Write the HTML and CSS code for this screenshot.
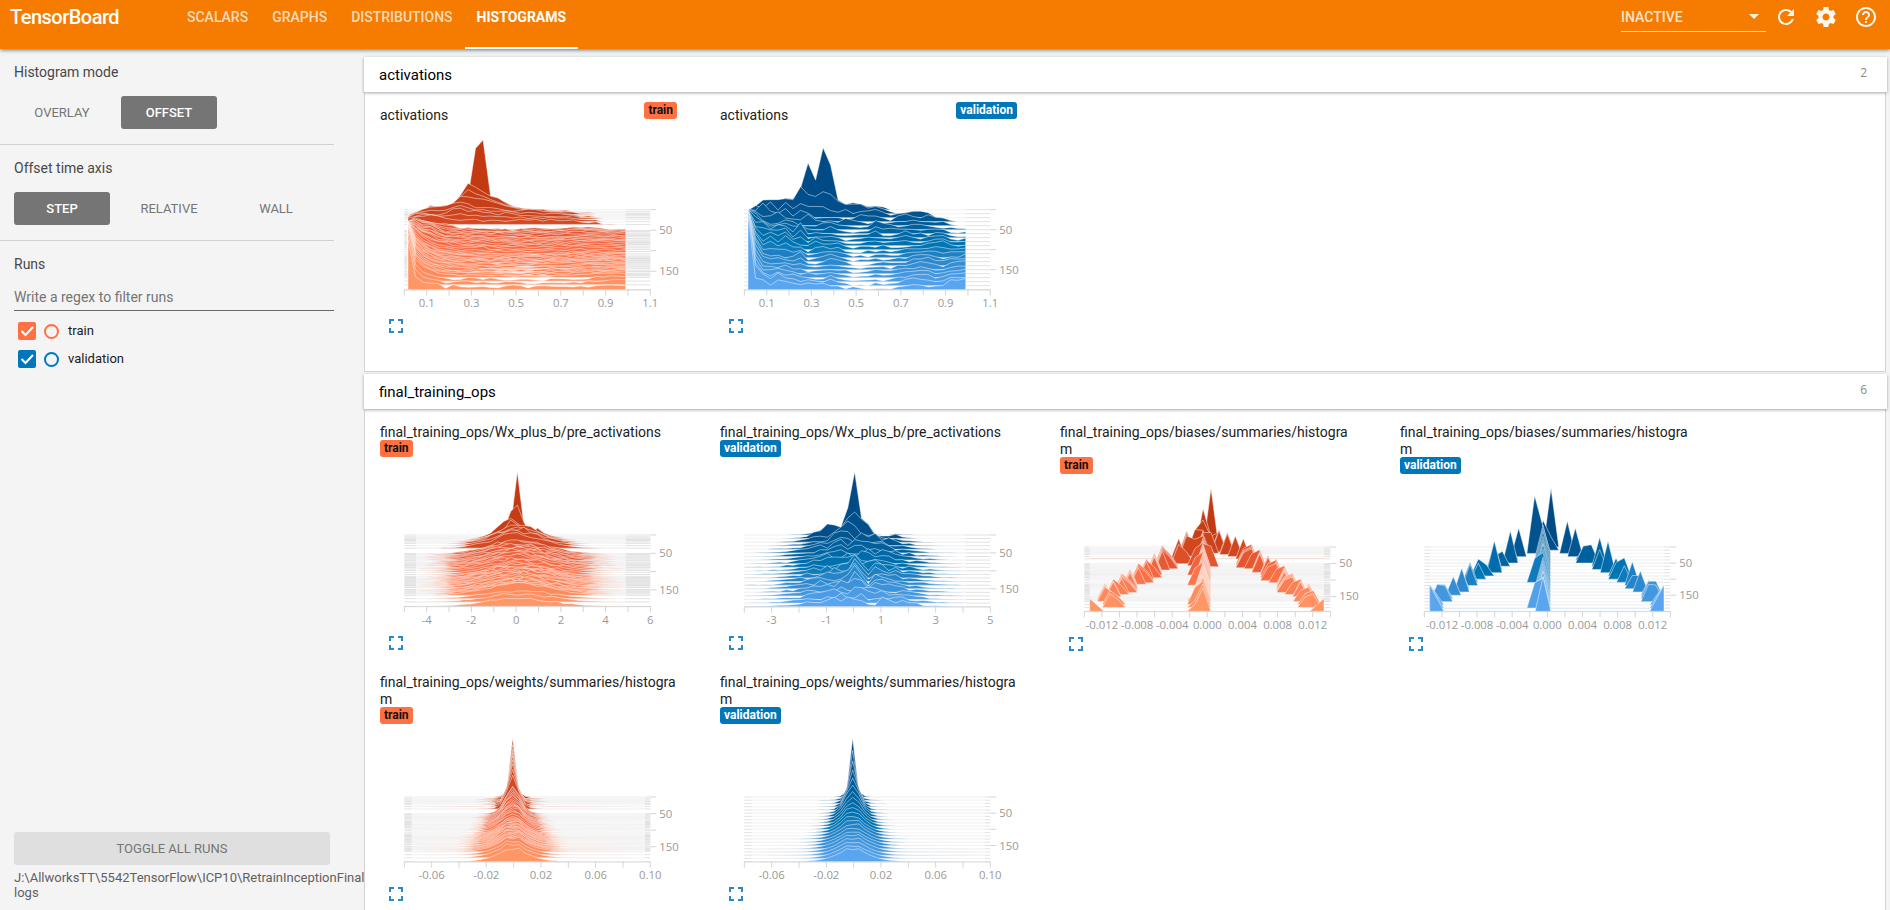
FILE: index.html
```html
<!DOCTYPE html>
<html lang="en">
<head>
<meta charset="utf-8">
<title>TensorBoard</title>
<link rel="stylesheet" href="styles.css">
</head>
<body>
<header class="toolbar">
  <div class="brand">TensorBoard</div>
  <nav class="tabs">
    <a class="tab">SCALARS</a>
    <a class="tab">GRAPHS</a>
    <a class="tab">DISTRIBUTIONS</a>
    <a class="tab tab-active">HISTOGRAMS</a>
  </nav>
  <div class="tools">
    <div class="inactive"><span>INACTIVE</span><i class="caret"></i></div>
    <svg class="tool-icon" viewBox="0 0 24 24"><path d="M17.65 6.35C16.2 4.9 14.21 4 12 4c-4.42 0-7.99 3.58-7.99 8s3.57 8 7.99 8c3.73 0 6.84-2.55 7.73-6h-2.08c-.82 2.33-3.04 4-5.65 4-3.31 0-6-2.69-6-6s2.69-6 6-6c1.66 0 3.14.69 4.22 1.78L13 11h7V4l-2.35 2.35z"/></svg>
    <svg class="tool-icon" viewBox="0 0 24 24"><path d="M19.43 12.98c.04-.32.07-.64.07-.98s-.03-.66-.07-.98l2.11-1.65c.19-.15.24-.42.12-.64l-2-3.46c-.12-.22-.39-.3-.61-.22l-2.49 1c-.52-.4-1.08-.73-1.69-.98l-.38-2.65C14.46 2.18 14.25 2 14 2h-4c-.25 0-.46.18-.49.42l-.38 2.65c-.61.25-1.17.59-1.69.98l-2.49-1c-.23-.09-.49 0-.61.22l-2 3.46c-.13.22-.07.49.12.64l2.11 1.65c-.04.32-.07.65-.07.98s.03.66.07.98l-2.11 1.65c-.19.15-.24.42-.12.64l2 3.46c.12.22.39.3.61.22l2.49-1c.52.4 1.08.73 1.69.98l.38 2.65c.03.24.24.42.49.42h4c.25 0 .46-.18.49-.42l.38-2.65c.61-.25 1.17-.59 1.69-.98l2.49 1c.23.09.49 0 .61-.22l2-3.46c.12-.22.07-.49-.12-.64l-2.11-1.65zM12 15.5c-1.93 0-3.5-1.57-3.5-3.5s1.57-3.5 3.5-3.5 3.500 1.57 3.500 3.500-1.570 3.500-3.500 3.500z"/></svg>
    <svg class="tool-icon" viewBox="0 0 24 24"><path d="M11 18h2v-2h-2v2zm1-16C6.480 2 2 6.480 2 12s4.480 10 10 10 10-4.480 10-10S17.520 2 12 2zm0 18c-4.410 0-8-3.590-8-8s3.590-8 8-8 8 3.590 8 8-3.590 8-8 8zm0-14c-2.210 0-4 1.790-4 4h2c0-1.100.9-2 2-2s2 .9 2 2c0 2-3 1.750-3 5h2c0-2.250 3-2.500 3-5 0-2.210-1.790-4-4-4z"/></svg>
  </div>
</header>
<div class="page">
  <aside class="sidebar">
    <section class="group">
      <h3>Histogram mode</h3>
      <div class="choices"><button class="choice">OVERLAY</button><button class="choice chosen">OFFSET</button></div>
    </section>
    <section class="group">
      <h3>Offset time axis</h3>
      <div class="choices"><button class="choice chosen">STEP</button><button class="choice">RELATIVE</button><button class="choice">WALL</button></div>
    </section>
    <section class="group runs">
      <h3>Runs</h3>
      <div class="regex">Write a regex to filter runs</div>
      <div class="run run-train"><svg class="check" viewBox="0 0 18 18"><rect width="18" height="18" rx="2"/><path d="M3.500 9l4 4 7.500-8"/></svg><i class="ring"></i><span>train</span></div>
      <div class="run run-validation"><svg class="check" viewBox="0 0 18 18"><rect width="18" height="18" rx="2"/><path d="M3.500 9l4 4 7.500-8"/></svg><i class="ring"></i><span>validation</span></div>
    </section>
    <footer class="side-foot">
      <button class="toggle">TOGGLE ALL RUNS</button>
      <div class="logdir">J:\AllworksTT\5542TensorFlow\ICP10\RetrainInceptionFinal<br>logs</div>
    </footer>
  </aside>
  <main class="main">
    <section class="pane">
      <div class="pane-head"><span>activations</span><em>2</em></div>
      <div class="pane-body pane-one" id="pane-activations"></div>
    </section>
    <section class="pane">
      <div class="pane-head"><span>final_training_ops</span><em>6</em></div>
      <div class="pane-body pane-two" id="pane-final"></div>
    </section>
  </main>
</div>
<script src="charts.js"></script>
</body>
</html>
```
FILE: styles.css
```css
* { box-sizing: border-box; }
body { margin: 0; height: 910px; overflow: hidden; background: #f4f4f4; color: #212121; font-family: Roboto, "Open Sans", sans-serif; font-size: 14px; display: flex; flex-direction: column; }
button { font: inherit; border: 0; padding: 0; }
.toolbar { height: 49px; flex: none; background: #f57c00; color: #fff; display: flex; position: relative; z-index: 2; box-shadow: 0 1px 4px rgba(0,30,50,.6); }
.brand { width: 175px; padding-left: 10px; line-height: 35px; font-size: 20px; font-weight: 500; letter-spacing: -.52px; }
.tabs { display: flex; }
.tab { padding: 0 12px; line-height: 34px; font-weight: 500; color: rgba(255,255,255,.72); }
.tab-active { color: #fff; border-bottom: 2px solid #fff; font-weight: 700; }
.tools { margin-left: auto; height: 34px; display: flex; align-items: center; padding-right: 12px; gap: 16px; }
.inactive { width: 145px; height: 25px; margin-top: 5px; margin-right: -8px; border-bottom: 1px solid #fde3c4; display: flex; justify-content: space-between; align-items: center; padding: 0 7px 5px 0; font-weight: 500; color: rgba(255,255,255,.8); }
.caret { border: 5px solid transparent; border-top-color: #fff3e0; border-bottom: 0; }
.tool-icon { width: 24px; height: 24px; fill: #fff8ee; }
.page { flex: 1; display: flex; min-height: 0; }
.sidebar { width: 364px; flex: none; display: flex; flex-direction: column; overflow: hidden; }
.group { width: 334px; height: 96px; padding: 15px 0 0 14px; border-bottom: 1px solid #d0d0d0; }
.group h3 { margin: 0 0 15px; font-size: 14px; line-height: 17px; font-weight: 400; color: #484848; }
.choices { display: flex; gap: 11px; }
.choice { width: 96px; height: 33px; border-radius: 3px; background: none; color: #757575; font-size: 13px; padding: 0 0 1px; }
.chosen { background: #757575; color: #fff; font-weight: 500; }
.runs { height: auto; border: 0; }
.group.runs h3 { margin-bottom: 7px; }
.regex { height: 31px; line-height: 34px; border-bottom: 1px solid #686868; color: #757575; margin-bottom: 6px; }
.run { height: 28px; display: flex; align-items: center; padding-left: 4px; }
.check { width: 18px; height: 18px; fill: currentColor; }
.check path { fill: none; stroke: #fff; stroke-width: 2; }
.ring { width: 15px; height: 15px; border: 2px solid currentColor; border-radius: 50%; margin: 0 9px 0 8px; }
.run span { color: #212121; font-size: 13px; padding-bottom: 1px; }
.run-train { color: #ff7043; }
.run-validation { color: #0077bb; }
.side-foot { margin-top: auto; padding: 0 0 10px 14px; }
.toggle { width: 316px; height: 33px; display: block; border-radius: 3px; background: #dfdfdf; color: #757575; margin-bottom: 5px; font-size: 13px; }
.logdir { white-space: nowrap; line-height: 15px; color: #616161; font-size: 13px; }
.main { flex: 1; padding: 8px 3px 0 0; min-width: 0; }
.pane-head { height: 35px; display: flex; justify-content: space-between; padding: 0 20px 0 15px; line-height: 37px; background: #fff; color: #000; font-size: 15px; position: relative; box-shadow: 0 1px 3px rgba(0,0,0,.36); }
.pane-head em { font: 12px/31px "Open Sans", sans-serif; color: #8a8a8a; }
.pane-body { margin: 0 1px 0 0; background: #fff; border: 1px solid #d4d4d4; border-top: 0; display: grid; grid-template-columns: repeat(4, 340px); grid-auto-rows: 250px; padding-left: 15px; align-content: start; }
.pane-one { height: 280px; margin-bottom: 2px; padding-top: 10px; }
.pane-two { height: 540px; padding-top: 14px; }
.card-title { width: 299px; line-height: 17px; word-break: break-all; padding-top: 1px; margin-bottom: -1px; }
.tag { display: table; height: 17px; line-height: 16px; padding: 0 4px; border-radius: 3px; font-size: 12px; font-weight: 700; }
.tag-train { background: #ff7043; color: #111; }
.tag-validation { background: #0077b8; color: #fff; }
.inline-head { display: flex; justify-content: space-between; width: 297px; height: 22px; }
.inline-head .card-title { width: auto; padding-top: 5px; }
.plot { display: block; width: 300px; overflow: visible; }
.plot text { font-family: "Open Sans", sans-serif; font-size: 34px; fill: #999; }
.expand { display: block; width: 14px; height: 14px; margin: 1px 0 0 9px; fill: none; stroke: #2b88c9; stroke-width: 2; }
```
FILE: charts.js
```js
// Offset-mode histograms. Plot coordinates use three units per CSS pixel.
const RAMP = {
  train: [[0, [194, 58, 18]], [0.25, [220, 78, 40]], [0.55, [252, 112, 72]], [1, [255, 150, 102]]],
  validation: [[0, [0, 74, 134]], [0.5, [0, 117, 180]], [0.6, [30, 128, 195]], [1, [90, 165, 240]]]
};
const TRAIN_STEPS = [0, 5, 9, 12, 15, 19, 23, 29, 36, 51, 53, 57, 60, 63, 66, 70, 74, 77, 80, 83, 85, 89, 93, 97, 102, 108, 113, 116, 119, 121, 124, 127, 129, 132, 135, 138, 142, 144, 149, 151, 155, 158, 161, 165, 174, 183, 195];
const VAL_STEPS = Array.from({ length: 21 }, (_, k) => k * 10);

function rng(seed) {
  return () => {
    seed = (seed * 1664525 + 1013904223) >>> 0;
    return seed / 4294967296;
  };
}
function lerpKeys(keys, t) {
  if (t <= keys[0][0]) return keys[0][1].slice();
  for (let i = 1; i < keys.length; i++) {
    if (t <= keys[i][0]) {
      const [a, va] = keys[i - 1], [b, vb] = keys[i], f = (t - a) / (b - a);
      return va.map((v, j) => v + ((vb[j] || 0) - v) * f);
    }
  }
  return keys[keys.length - 1][1].slice();
}
function tone(run, t) {
  return `rgb(${lerpKeys(RAMP[run], t).map(Math.round).join(',')})`;
}
const pad = (a, n = 30) => a.concat(Array(n - a.length).fill(0));

const actTrain = [
  [0, pad([0, 0, 0, 3, 6, 8, 10, 14, 40, 184, 209, 41, 33, 22, 10, 5, 3, 2, 1])],
  [5, pad([0, 0, 6, 16, 14, 17, 24, 48, 86, 76, 62, 44, 38, 26, 14, 9, 7, 6, 5, 4, 3, 2, 1])],
  [12, pad([0, 5, 15, 22, 21, 26, 32, 55, 55, 50, 44, 40, 34, 28, 22, 18, 16, 15, 13, 11, 9, 7, 5, 3, 2])],
  [15, pad([0, 10, 18, 26, 28, 28, 35, 42, 34, 26, 26, 22, 20, 18, 16, 18, 18, 17, 15, 12, 10, 7, 4, 2, 1])],
  [23, pad([3, 14, 20, 15, 10, 16, 28, 30, 26, 24, 22, 16, 14, 18, 14, 10, 10, 10, 10, 10, 10, 9, 9, 7, 5, 3])],
  [36, pad([12, 22, 24, 28, 24, 18, 16, 14, 12, 14, 12, 14, 12, 12, 12, 13, 13, 13, 13, 13, 13, 12, 11, 9, 7, 5, 3, 1])],
  [51, [28, 36, 30, 26, 20, 18, 16, 9, 7, 6, 6, 5, 5, 4, 4, 5, 5, 6, 6, 7, 7, 8, 9, 9, 9, 8, 5, 4, 3, 3]],
  [63, [42, 48, 36, 38, 22, 12, 17, 14, 12, 10, 9, 8, 10, 9, 8, 8, 9, 9, 10, 11, 13, 13, 14, 14, 14, 14, 13, 12, 11, 10]],
  [102, [90, 62, 44, 32, 22, 20, 14, 12, 11, 12, 14, 8, 8, 8, 9, 10, 9, 8, 8, 11, 12, 13, 14, 14, 13, 13, 13, 13, 12, 11]],
  [150, [145, 62, 38, 27, 18, 15, 12, 10, 10, 7, 6, 6, 5, 5, 5, 4, 5, 5, 5, 8, 8, 7, 10, 13, 12, 12, 12, 13, 13, 14]],
  [174, [165, 52, 28, 18, 11, 7, 6, 7, 8, 8, 7, 7, 5, 5, 4, 4, 4, 3, 3, 5, 6, 6, 7, 8, 9, 11, 11, 13, 14, 14]],
  [195, [150, 36, 24, 20, 19, 7, 16, 11, 9, 8, 7, 7, 7, 11, 12, 9, 7, 8, 9, 8, 7, 7, 8, 8, 9, 10, 11, 12, 14, 15]]
];
const actVal = [
  [0, pad([0, 3, 26, 22, 28, 34, 32, 64, 140, 89, 186, 134, 29, 16, 21, 16, 9, 11, 8])],
  [10, pad([5, 26, 37, 46, 43, 46, 44, 78, 61, 55, 63, 55, 38, 28, 32, 27, 20, 22, 18, 5, 0])],
  [20, pad([20, 35, 30, 44, 26, 48, 28, 42, 32, 32, 32, 22, 20, 22, 12, 15, 22, 24, 20, 4, 10, 18, 18, 17, 15, 4])],
  [30, pad([35, 37, 52, 30, 22, 36, 18, 34, 28, 12, 15, 12, 10, 8, 6, 18, 20, 14, 12, 6, 15, 20, 18, 14, 18, 13, 11, 5])],
  [40, pad([48, 46, 30, 26, 38, 24, 18, 20, 34, 20, 12, 18, 14, 24, 15, 10, 6, 14, 12, 7, 10, 12, 15, 13, 14, 12, 10, 4])],
  [50, [62, 52, 26, 20, 16, 32, 28, 8, 9, 13, 20, 22, 11, 14, 8, 10, 8, 25, 22, 16, 9, 15, 18, 12, 10, 9, 5, 4, 4, 4]],
  [70, [85, 45, 46, 28, 42, 38, 14, 42, 14, 12, 10, 16, 8, 6, 7, 10, 14, 18, 10, 9, 13, 18, 12, 13, 9, 15, 16, 10, 5, 5]],
  [100, [120, 52, 24, 43, 24, 40, 22, 17, 11, 26, 20, 14, 22, 9, 3, 8, 11, 7, 13, 8, 10, 11, 8, 10, 18, 24, 24, 16, 13, 14]],
  [130, [155, 67, 25, 15, 23, 14, 19, 26, 7, 9, 16, 24, 19, 9, 1, 3, 3, 9, 8, 6, 9, 12, 19, 23, 24, 14, 12, 18, 15, 21]],
  [160, [190, 56, 25, 21, 17, 23, 13, 14, 9, 8, 10, 12, 14, 11, 3, 6, 6, 13, 8, 8, 10, 13, 18, 22, 18, 12, 12, 19, 25, 26]],
  [190, [230, 58, 32, 22, 38, 20, 24, 12, 18, 11, 12, 18, 12, 5, 2, 4, 2, 6, 5, 8, 10, 18, 21, 19, 18, 12, 12, 25, 25, 24]],
  [200, [220, 37, 31, 17, 28, 26, 17, 15, 18, 14, 18, 12, 11, 2, 5, 4, 3, 3, 5, 4, 7, 11, 14, 14, 12, 12, 12, 27, 31, 30]]
];
function fromKeys(keys, noise, x0, gap, seed) {
  const r = rng(seed);
  return s => lerpKeys(keys, s).map((h, i) => {
    const wobble = s && h > 1 ? (r() - 0.5) * noise : 0;
    return [x0 + i * gap, Math.max(0, h + wobble)];
  });
}
// Bell profile whose amplitude and spread depend on the step.
function bell(center, gap, half, amp, left, right, noise, seed, heads) {
  const r = rng(seed);
  return s => {
    const out = [], A = amp(s);
    for (let j = -half; j <= half; j++) {
      const w = j < 0 ? left(s) : right(s), q = Math.abs(j * gap) / w;
      let h = A * Math.exp(-q * q / 2);
      if (s) h *= 1 + (r() - 0.5) * noise;
      if (heads[s] && heads[s][j] !== undefined) h = heads[s][j];
      out.push([center + j * gap, h < 0.4 ? 0 : h]);
    }
    return out;
  };
}
// Separate spikes rising from a flat line: [x, height] pairs, at the outer edges they are half spikes.
const BIN = 24.4, EDGE = 43;
function spikes(list, x0 = 119, x1 = 822) {
  const map = new Map([[x0, 0], [x1, 0]]);
  list.forEach(([x, h]) => map.set(x, Math.max(h, map.get(x) || 0)));
  const xs = [...map.keys()].sort((a, b) => a - b), out = [];
  xs.forEach((x, i) => {
    const h = map.get(x), prev = xs[i - 1], next = xs[i + 1];
    const reach = x === x0 || x === x1 ? EDGE : BIN - 1;
    if (h && prev !== undefined && x - prev > BIN + 4) out.push([x - reach, 0]);
    out.push([x, h]);
    if (h && next !== undefined && next - x > BIN + 4) out.push([x + reach, 0]);
  });
  return out;
}
const BIAS_R = [[0, 483], [9, 507], [14, 507], [19, 532], [23, 532], [29, 556], [36, 580], [51, 605], [60, 605], [66, 629], [74, 629], [80, 654], [89, 678], [97, 678], [108, 703], [119, 703], [127, 727], [142, 751], [155, 776], [170, 790], [195, 822]];
const BIAS_L = [[0, 483], [5, 459], [12, 435], [15, 410], [23, 410], [36, 386], [53, 337], [63, 337], [74, 313], [80, 313], [89, 289], [102, 265], [116, 240], [129, 215], [144, 190], [155, 165], [174, 180], [195, 119]];
const at = (table, s) => { let v = table[0][1]; for (const [k, x] of table) if (s >= k) v = x; return v; };
function biasTrain(s) {
  if (s === 0) return spikes([[483, 176]]);
  if (s === 5) return spikes([[459, 120], [483, 35]]);
  if (s === 9) return spikes([[435, 60], [459, 90], [483, 40], [507, 55]]);
  const h = 66 - s * 0.14, list = [[459, s < 40 ? 62 : 70]];
  if ([29, 57, 85, 116, 174].includes(s)) list.push([435, 52]);
  if ([19, 60].includes(s)) list.push([483, 62]);
  if (s > 160) list.push([435, 22]);
  list.push([at(BIAS_L, s), h], [at(BIAS_R, s), h]);
  if (s > 36 && s < 190 && s % 3 === 0) list.push([at(BIAS_R, s) - 24, h * 0.8], [at(BIAS_L, s) + 24, h * 0.6]);
  return spikes(list);
}
const VAL_BIAS = [
  [[483, 176]], [[459, 90], [483, 40]], [[434, 173], [459, 80], [532, 97]], [[386, 86], [459, 95], [556, 86]],
  [[361, 60], [459, 95], [580, 38], [604, 36]], [[361, 97], [459, 95], [580, 51], [604, 55]], [[337, 45], [313, 30], [459, 90], [629, 87]],
  [[313, 80], [459, 90], [629, 60]], [[313, 96], [459, 90], [654, 95]], [[265, 51], [289, 34], [459, 95], [678, 54]],
  [[265, 48], [459, 90], [678, 50], [703, 64]], [[240, 60], [434, 72], [459, 90], [703, 50]], [[240, 64], [459, 85], [727, 72]],
  [[215, 52], [459, 85], [727, 40], [751, 40]], [[215, 72], [459, 85], [751, 64]], [[190, 56], [459, 85], [776, 46]],
  [[142, 42], [165, 42], [459, 85], [776, 52], [798, 52]], [[142, 52], [165, 48], [459, 90], [776, 52], [798, 50]],
  [[119, 62], [459, 85], [822, 60]], [[119, 70], [434, 76], [459, 90], [822, 68]], [[119, 80], [459, 104], [822, 79]]
];
const preTrain = bell(472, 20, 15, s => s < 12 ? 70 : s > 165 ? 24 : 34 + 20 * Math.exp(-s / 30),
  s => 24 + 72 * (1 - Math.exp(-s / 26)), s => 28 + 76 * (1 - Math.exp(-s / 30)), 0.38, 11,
  { 0: { '-1': 26, 0: 190, 1: 27, 2: 3, '-2': 12 }, 5: { '-2': 22, '-1': 76, 0: 95, 1: 43, 2: 8 }, 9: { '-1': 60, 0: 46, 1: 26, 2: 9 }, 12: { '-1': 58, 0: 44, 1: 30 } });
const preVal = bell(464, 20.5, 16, s => s < 20 ? 60 : 26 + 16 * Math.exp(-s / 50),
  s => 60 + 58 * (1 - Math.exp(-s / 45)), s => 52 + 72 * (1 - Math.exp(-s / 50)), 0.9, 29,
  { 0: { '-3': 15, '-2': 25, '-1': 82, 0: 190, 1: 50, 2: 32, 3: 2, 4: 0, 5: 0 }, 10: { '-2': 34, '-1': 62, 0: 80, 1: 58, 2: 42, 3: 9, 4: 8, 5: 8 }, 20: { '-1': 63, 0: 50, 1: 24 },
    70: { 1: 18 }, 90: { 0: 38, 1: 20 }, 110: { 0: 60, 1: 34, 2: 12 }, 120: { 0: 58, 1: 34, 2: 10 }, 130: { 0: 56, 1: 30, 2: 8 }, 140: { 0: 60, 1: 32, 2: 5 }, 150: { 0: 52, 1: 30, 2: 8 }, 160: { 0: 42, 2: 12 }, 190: { 2: 9 }, 200: { 0: 22, 1: 18, 2: 7, 3: 5 } });
// Sharp centred peak that settles into a low, wide mound.
function weights(noise, seed) {
  const r = rng(seed);
  return s => {
    const A = 34 + 142 * Math.exp(-s / 48), w = Math.min(46, 6.5 + 0.25 * s), out = [];
    for (let j = -9; j <= 9; j++) {
      const x = Math.abs(j * 18.5), core = s < 12 ? [A, 16, 3][Math.abs(j)] || 0 : A * Math.exp(-Math.pow(x / w, 1.5) / 1.7);
      const tail = s ? 14 * Math.exp(-x / 26) * (1 + (r() - .5) * noise) : 0;
      const h = core + (j ? tail : 0);
      out.push([458 + j * 18.5, h < 0.35 ? 0 : h]);
    }
    return out;
  };
}

const FINAL = 'final_training_ops/';
const CARDS = [
  { pane: 'pane-activations', title: 'activations', run: 'train', inline: true, view: [60, 102, 582], y: [359, 599], ext: [144, 797], f: fromKeys(actTrain, 6, 144, 22.52, 7), ticks: 11, labels: ['0.1', '0.3', '0.5', '0.7', '0.9', '1.1'] },
  { pane: 'pane-activations', title: 'activations', run: 'validation', inline: true, view: [60, 102, 582], y: [359, 599], ext: [144, 797], f: fromKeys(actVal, 8, 144, 22.52, 9), ticks: 11, labels: ['0.1', '0.3', '0.5', '0.7', '0.9', '1.1'] },
  { pane: 'pane-final', title: FINAL + 'Wx_plus_b/pre_activations', run: 'train', view: [60, 171, 534], y: [405, 619], ext: [168, 797], f: preTrain, ticks: 11, labels: ['-4', '-2', '0', '2', '4', '6'] },
  { pane: 'pane-final', title: FINAL + 'Wx_plus_b/pre_activations', run: 'validation', view: [60, 171, 534], y: [405, 620], ext: [150, 797], f: preVal, ticks: 9, labels: ['-3', '-1', '1', '3', '5'] },
  { pane: 'pane-final', title: FINAL + 'biases/summaries/histogram', run: 'train', view: [30, 222, 486], y: [441, 634], ext: [119, 822], f: biasTrain, ticks: 14, labels: ['-0.012', '-0.008', '-0.004', '0.000', '0.004', '0.008', '0.012'] },
  { pane: 'pane-final', title: FINAL + 'biases/summaries/histogram', run: 'validation', view: [30, 222, 486], y: [441, 634], ext: [119, 822], f: s => spikes(VAL_BIAS[s / 10]), ticks: 14, labels: ['-0.012', '-0.008', '-0.004', '0.000', '0.004', '0.008', '0.012'] },
  { pane: 'pane-final', title: FINAL + 'weights/summaries/histogram', run: 'train', view: [60, 192, 486], y: [411, 605], ext: [155, 855], f: weights(1.2, 3), ticks: 9, labels: ['-0.06', '-0.02', '0.02', '0.06', '0.10'] },
  { pane: 'pane-final', title: FINAL + 'weights/summaries/histogram', run: 'validation', view: [60, 192, 486], y: [411, 605], ext: [155, 855], f: weights(0.8, 5), ticks: 9, labels: ['-0.06', '-0.02', '0.02', '0.06', '0.10'] }
];

function plot(card) {
  const [vx, vy, vh] = card.view, [y0, y1] = card.y, left = vx + 73, right = vx + 811;
  const steps = card.run === 'train' ? TRAIN_STEPS : VAL_STEPS, last = steps[steps.length - 1];
  let g = '';
  for (const s of steps) {
    const y = y0 + (y1 - y0) * s / last, pts = card.f(s), [a, b] = card.ext;
    const line = pts.map(([x, h]) => `${x.toFixed(1)},${(y - h).toFixed(1)}`).join('L');
    g += `<path d="M${left} ${y}H${right}" stroke="#dcdcdc" stroke-width="2.500"/>`;
    g += `<path d="M${Math.min(a, pts[0][0])},${y}L${line}L${Math.max(b, pts[pts.length - 1][0])},${y}Z" fill="${tone(card.run, s / last)}" stroke="#fff" stroke-opacity=".55" stroke-width="2.600"/>`;
  }
  g += `<path d="M${left} ${y1 + 1}H${right}" stroke="#ccc" stroke-width="2"/>`;
  for (let i = 0; i <= card.ticks; i++) {
    const x = left + (right - left) * i / card.ticks;
    g += `<path d="M${x} ${y1}v18" stroke="#ccc" stroke-width="2.500"/>`;
  }
  card.labels.forEach((t, i) => {
    const x = left + (right - left) * (1 + 2 * i) / card.ticks;
    g += `<text x="${x}" y="${y1 + 53}" text-anchor="middle">${t}</text>`;
  });
  for (const s of [0, 50, 100, 150]) {
    const y = y0 + (y1 - y0) * s / last;
    g += `<path d="M${right} ${y}h18" stroke="#ccc" stroke-width="2.500"/>`;
    if (s % 100) g += `<text x="${right + 27}" y="${y + 12}">${s}</text>`;
  }
  return `<svg class="plot" height="${vh / 3}" viewBox="${vx} ${vy} 900 ${vh}">${g}</svg>`;
}
for (const card of CARDS) {
  const el = document.createElement('article');
  const head = `<div class="card-title">${card.title}</div><span class="tag tag-${card.run}">${card.run}</span>`;
  el.innerHTML = (card.inline ? `<div class="inline-head">${head}</div>` : head) + plot(card) +
    '<svg class="expand" viewBox="0 0 14 14"><path d="M1 5V1h4M9 1h4v4M13 9v4H9M5 13H1V9"/></svg>';
  document.getElementById(card.pane).append(el);
}
```
